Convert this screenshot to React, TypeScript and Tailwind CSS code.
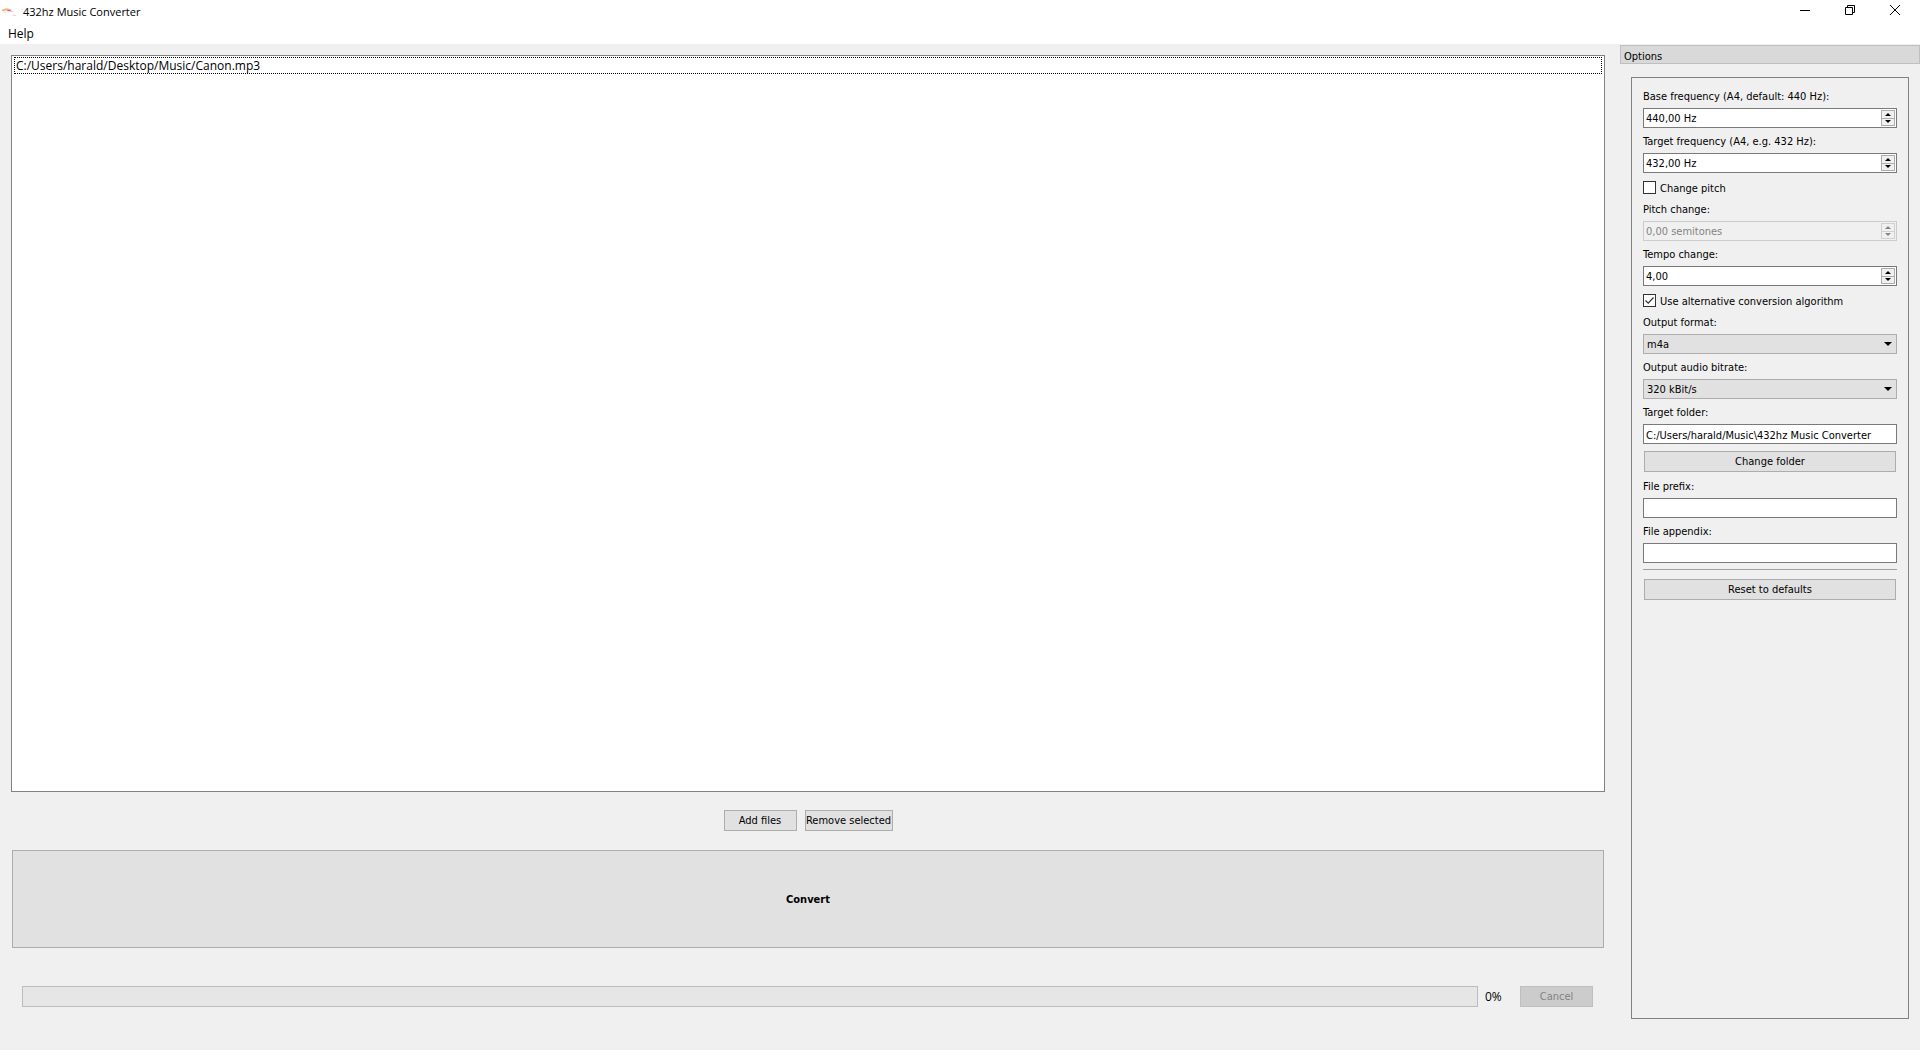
import React, { useState } from 'react';

const uiFont = "font-['DejaVu_Sans_Condensed','DejaVu_Sans',sans-serif]";
const titleFont = "font-['Open_Sans','Noto_Sans',sans-serif]";
const labelStyle = 'h-[13px] leading-[15px]';

const AppIcon: React.FC = () => (
  <svg className="w-4 h-4" viewBox="0 0 16 16" fill="none">
    <path d="M0 6.5C2 5.6 4 5.4 6 6" stroke="#f3a873" strokeWidth="1.6" />
    <path d="M1 8.3h3" stroke="#f8dcc4" />
    <path d="M3 4.8h4" stroke="#f0d264" />
    <path d="M5.5 6.4h3.5" stroke="#d9578c" strokeWidth="1.6" />
    <path d="M8 6.6l2.5.8" stroke="#e8a0b8" />
    <path d="M10.5 11l3.5.4" stroke="#d4d4dc" />
  </svg>
);

const TitleBar: React.FC = () => (
  <header className={`flex items-center h-6 bg-white text-[11px] ${titleFont}`}>
    <div className="flex flex-1 items-center gap-[5px] pl-[2px]">
      <AppIcon />
      <h1>432hz Music Converter</h1>
    </div>
    <div className="flex pr-[2px] pb-1">
      <button aria-label="Minimize" className="flex items-center justify-center w-[46px] h-5">
        <svg className="w-[10px] h-[10px]" viewBox="0 0 10 10" stroke="#000">
          <path d="M0 5.5h10" />
        </svg>
      </button>
      <button aria-label="Restore" className="flex items-center justify-center w-11 h-5">
        <svg className="w-[10px] h-[10px]" viewBox="0 0 10 10" fill="none" stroke="#000">
          <path d="M.5 2.5h7v7h-7zM2.5 2.5v-2h7v7h-2" />
        </svg>
      </button>
      <button aria-label="Close" className="flex items-center justify-center w-[46px] h-5">
        <svg className="w-[10px] h-[10px]" viewBox="0 0 10 10" stroke="#000">
          <path d="M0 0l10 10M10 0L0 10" />
        </svg>
      </button>
    </div>
  </header>
);

interface ButtonProps {
  children: React.ReactNode;
  className?: string;
  disabled?: boolean;
}

const Button: React.FC<ButtonProps> = ({ children, className = 'h-[21px]', disabled }) => (
  <button
    disabled={disabled}
    className={`pt-[2px] border border-[#adadad] bg-[#e1e1e1] disabled:border-[#bfbfbf] disabled:bg-[#cccccc] disabled:text-[#838383] ${className}`}
  >
    {children}
  </button>
);

interface FieldProps {
  id: string;
  label: string;
  defaultValue?: string;
  disabled?: boolean;
}

const TextField: React.FC<FieldProps> = ({ id, label, defaultValue }) => (
  <>
    <label htmlFor={id} className={labelStyle}>{label}</label>
    <input
      id={id}
      type="text"
      defaultValue={defaultValue}
      className="w-full h-5 px-[2px] pt-[2px] border border-[#7a7a7a] bg-white outline-none"
    />
  </>
);

const SpinField: React.FC<FieldProps> = ({ id, label, defaultValue, disabled }) => (
  <>
    <label htmlFor={id} className={labelStyle}>{label}</label>
    <div className={`flex h-5 p-px border ${disabled ? 'border-[#cccccc] bg-[#f0f0f0] text-[#838383]' : 'border-[#7a7a7a] bg-white'}`}>
      <input
        id={id}
        type="text"
        inputMode="decimal"
        defaultValue={defaultValue}
        disabled={disabled}
        className="flex-1 min-w-0 px-px pt-[2px] outline-none"
      />
      <div className="flex flex-col w-[14px]">
        <button
          aria-label={`Increase ${label}`}
          disabled={disabled}
          className="flex flex-1 items-center justify-center border border-[#adadad] bg-[#f0f0f0] disabled:border-[#d0d0d0]"
        >
          <svg className="w-[6px] h-[3px]" viewBox="0 0 6 3" fill="currentColor"><path d="M0 3L3 0l3 3z" /></svg>
        </button>
        <button
          aria-label={`Decrease ${label}`}
          disabled={disabled}
          className="flex flex-1 items-center justify-center border border-t-0 border-[#adadad] bg-[#f0f0f0] disabled:border-[#d0d0d0]"
        >
          <svg className="w-[6px] h-[3px]" viewBox="0 0 6 3" fill="currentColor"><path d="M0 0h6L3 3z" /></svg>
        </button>
      </div>
    </div>
  </>
);

interface SelectFieldProps {
  id: string;
  label: string;
  options: string[];
}

const SelectField: React.FC<SelectFieldProps> = ({ id, label, options }) => (
  <>
    <label htmlFor={id} className={labelStyle}>{label}</label>
    <div className="grid items-center h-5">
      <select
        id={id}
        className="col-start-1 row-start-1 w-full h-5 pl-[3px] pt-[2px] appearance-none border border-[#adadad] bg-[#e1e1e1] outline-none"
      >
        {options.map((option) => (
          <option key={option}>{option}</option>
        ))}
      </select>
      <svg className="col-start-1 row-start-1 justify-self-end w-2 h-1 mr-[5px] pointer-events-none" viewBox="0 0 8 4">
        <path d="M0 0h8L4 4z" />
      </svg>
    </div>
  </>
);

interface CheckFieldProps {
  label: string;
  initial?: boolean;
}

const CheckField: React.FC<CheckFieldProps> = ({ label, initial = false }) => {
  const [checked, setChecked] = useState(initial);

  return (
    <label className="flex items-center gap-1 h-[17px]">
      <span className="grid w-[13px] h-[13px]">
        <input
          type="checkbox"
          checked={checked}
          onChange={() => setChecked(!checked)}
          className="col-start-1 row-start-1 w-[13px] h-[13px] appearance-none border border-[#333333] bg-white"
        />
        {checked && (
          <svg className="col-start-1 row-start-1 w-[13px] h-[13px] pointer-events-none" viewBox="0 0 13 13" fill="none">
            <path d="M2.5 6.5l2.7 2.7 5.3-5.7" stroke="#333333" strokeWidth="1.2" />
          </svg>
        )}
      </span>
      <span className={labelStyle}>{label}</span>
    </label>
  );
};

const OptionsDock: React.FC = () => (
  <aside className="flex flex-col w-[300px] pt-px pb-[31px]">
    <h2 className="h-[19px] pl-[3px] border border-[#bfbfbf] bg-[#d9d9d9] leading-[21px]">Options</h2>
    <div className="flex flex-1 flex-col gap-[6px] mt-[13px] ml-[11px] mr-[11px] p-[11px] border border-[#828282]">
      <SpinField id="base" label="Base frequency (A4, default: 440 Hz):" defaultValue="440,00 Hz" />
      <SpinField id="target" label="Target frequency (A4, e.g. 432 Hz):" defaultValue="432,00 Hz" />
      <CheckField label="Change pitch" />
      <SpinField id="pitch" label="Pitch change:" defaultValue="0,00 semitones" disabled />
      <SpinField id="tempo" label="Tempo change:" defaultValue="4,00" />
      <CheckField label="Use alternative conversion algorithm" initial />
      <SelectField id="format" label="Output format:" options={['m4a', 'mp3', 'flac', 'wav']} />
      <SelectField id="bitrate" label="Output audio bitrate:" options={['320 kBit/s', '256 kBit/s', '192 kBit/s']} />
      <TextField id="folder" label="Target folder:" defaultValue="C:/Users/harald/Music\432hz Music Converter" />
      <Button className="h-[21px] m-px">Change folder</Button>
      <TextField id="prefix" label="File prefix:" />
      <TextField id="appendix" label="File appendix:" />
      <hr className="h-[3px] border-t border-[#a0a0a0]" />
      <Button className="h-[21px] m-px">Reset to defaults</Button>
    </div>
  </aside>
);

const App: React.FC = () => {
  const files = ['C:/Users/harald/Desktop/Music/Canon.mp3'];

  return (
    <div className={`flex flex-col min-h-screen bg-[#f0f0f0] text-[11px] text-black ${uiFont}`}>
      <TitleBar />
      <nav className={`h-5 pl-2 bg-white text-xs leading-5 ${titleFont}`}>
        <button>Help</button>
      </nav>

      <div className="flex flex-1">
        <main className="flex flex-1 flex-col min-w-0 pt-[11px] pl-[11px] pr-[15px] pb-[43px]">
          {/* File list */}
          <ul className={`flex-1 px-[2px] py-px border border-[#828282] bg-white text-xs ${titleFont}`}>
            {files.map((file) => (
              <li key={file} className="h-[17px] pl-px border border-dotted border-black leading-[15px]">{file}</li>
            ))}
          </ul>

          <div className="flex justify-center gap-2 mt-[18px]">
            <Button className="w-[73px] h-[21px]">Add files</Button>
            <Button className="w-[88px] h-[21px]">Remove selected</Button>
          </div>

          <Button className="h-[98px] mx-px mt-[19px] font-bold">Convert</Button>

          {/* Progress */}
          <div className="flex items-center mt-[38px] ml-[11px] mr-3">
            <div role="progressbar" aria-label="Conversion" aria-valuenow={0} className="flex-1 h-[21px] border border-[#bcbcbc] bg-[#e6e6e6]"></div>
            <span className={`w-[42px] pl-[7px] text-xs ${titleFont}`}>0%</span>
            <Button className="w-[73px] h-[21px]" disabled>Cancel</Button>
          </div>
        </main>

        <OptionsDock />
      </div>
    </div>
  );
};

export default App;
